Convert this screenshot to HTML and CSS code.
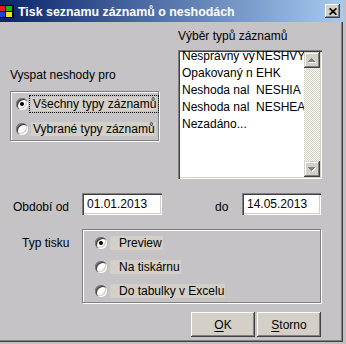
FILE: index.html
```html
<!DOCTYPE html>
<html lang="cs">
<head>
<meta charset="utf-8">
<title>Tisk seznamu záznamů o neshodách</title>
<link rel="stylesheet" href="styles.css">
</head>
<body>
<div class="window">
  <div class="titlebar">
    <svg class="app-icon" width="16" height="16" viewBox="0 0 16 16" shape-rendering="crispEdges">
      <rect x="0" y="2" width="16" height="13" fill="#000"/>
      <rect x="1" y="3" width="6" height="5" fill="#e02020"/>
      <rect x="8" y="3" width="6" height="5" fill="#20b020"/>
      <rect x="1" y="9" width="6" height="5" fill="#2040e0"/>
      <rect x="8" y="9" width="6" height="5" fill="#f0e020"/>
    </svg>
    <span class="title">Tisk seznamu záznamů o neshodách</span>
    <span class="close">
      <svg width="8" height="7" viewBox="0 0 8 7"><path d="M0.6 0.4 L7.4 6.6 M7.4 0.4 L0.6 6.6" stroke="#000" stroke-width="1.7"/></svg>
    </span>
  </div>
  <div class="client">
    <div class="top">
      <div class="scope">
        <div class="caption">Vyspat neshody pro</div>
        <div class="group scope-group">
          <div class="scope-option"><span class="radio on"></span><span class="opt-label focus">Všechny typy záznamů</span></div>
          <div class="scope-option"><span class="radio"></span><span class="opt-label">Vybrané typy záznamů</span></div>
        </div>
      </div>
      <div class="types">
        <div class="caption">Výběr typů záznamů</div>
        <div class="listbox">
          <div class="items">
            <div class="item"><span class="c1">Nesprávný vý</span><span class="c2">NESHVYS</span></div>
            <div class="item"><span class="c1">Opakovaný n</span><span class="c2">EHK</span></div>
            <div class="item"><span class="c1">Neshoda nal</span><span class="c2">NESHIA</span></div>
            <div class="item"><span class="c1">Neshoda nal</span><span class="c2">NESHEA</span></div>
            <div class="item"><span class="c1">Nezadáno...</span><span class="c2"></span></div>
          </div>
          <div class="scrollbar">
            <div class="sb-btn">
              <svg width="8" height="5" viewBox="0 0 8 5" shape-rendering="crispEdges"><path d="M4 1h1v1h1v1h1v1h1v1H1V4h1V3h1V2h1z" fill="#fff"/><path d="M3 0h1v1h1v1h1v1h1v1H0V3h1V2h1V1h1z" fill="#808080"/></svg>
            </div>
            <div class="sb-track"></div>
            <div class="sb-btn">
              <svg width="8" height="5" viewBox="0 0 8 5" shape-rendering="crispEdges"><path d="M1 1h7v1H7v1H6v1H5v1H4V4H3V3H2V2H1z" fill="#fff"/><path d="M0 0h7v1H6v1H5v1H4v1H3V3H2V2H1V1H0z" fill="#808080"/></svg>
            </div>
          </div>
        </div>
      </div>
    </div>
    <div class="dates">
      <span class="date-label">Období od</span>
      <span class="field field-from">01.01.2013</span>
      <span class="do-label">do</span>
      <span class="field field-to">14.05.2013</span>
    </div>
    <div class="print">
      <span class="print-label">Typ tisku</span>
      <div class="group print-group">
        <div class="option"><span class="radio on"></span><span class="opt-label wide">Preview</span></div>
        <div class="option"><span class="radio"></span><span class="opt-label wide">Na tiskárnu</span></div>
        <div class="option"><span class="radio"></span><span class="opt-label wide">Do tabulky v Excelu</span></div>
      </div>
    </div>
    <div class="buttons">
      <span class="btn"><u>O</u>K</span>
      <span class="btn"><u>S</u>torno</span>
    </div>
  </div>
</div>
</body>
</html>
```

FILE: styles.css
```css
* { box-sizing: border-box; }
html, body { margin: 0; padding: 0; }
body {
  width: 346px;
  height: 344px;
  overflow: hidden;
  background: #c0c0c0;
  font-family: "Liberation Sans", Arial, sans-serif;
  font-size: 12px;
  color: #000;
}
.window {
  width: 343px;
  height: 342px;
  display: flex;
  flex-direction: column;
  background: #c6c3c6;
}
.titlebar {
  flex: none;
  height: 22px;
  display: flex;
  align-items: flex-start;
  background: linear-gradient(to right, #0a246a, #a6caf0);
  overflow: hidden;
}
.app-icon {
  flex: none;
  margin: 3px 0 0 -2px;
}
.title {
  flex: 1;
  margin-left: 4px;
  padding-top: 2px;
  line-height: 20px;
  color: #fff;
  font-weight: bold;
  font-size: 12.4px;
  white-space: nowrap;
}
.close {
  flex: none;
  width: 15px;
  height: 14px;
  margin: 4px 3px 0 0;
  background: #d4d0c8;
  box-shadow: inset -1px -1px 0 #404040, inset 1px 1px 0 #fff, inset -2px -2px 0 #808080;
  display: flex;
  align-items: center;
  justify-content: center;
}
.client {
  flex: 1;
  box-shadow: inset -1px -1px 0 #404040, inset -2px -2px 0 #808080;
}
.caption { line-height: 14px; white-space: nowrap; }
.top { display: flex; margin-left: 10px; }
.scope { width: 149px; margin-top: 46px; }
.group {
  border: 1px solid #808080;
  box-shadow: inset 1px 1px 0 #fff, 1px 1px 0 #fff;
}
.scope-group {
  margin-top: 9px;
  height: 50px;
  padding: 4px 0 0 5px;
  display: flex;
  flex-direction: column;
  gap: 9px;
}
.scope-option {
  height: 16px;
  display: flex;
  align-items: center;
}
.radio {
  flex: none;
  position: relative;
  width: 12px;
  height: 12px;
  border-radius: 50%;
  background: #fff;
  box-shadow: inset 1px 1px 0 #808080, inset 2px 2px 0 #404040, inset -1px -1px 0 #fff, inset -2px -2px 0 #d4d0c8;
}
.radio.on::after {
  content: "";
  position: absolute;
  left: 4px;
  top: 4px;
  width: 4px;
  height: 4px;
  border-radius: 50%;
  background: #000;
}
.opt-label {
  margin-left: 3px;
  padding: 0 1px 0 2px;
  height: 14px;
  line-height: 14px;
  background: #d4d0c8;
  white-space: nowrap;
}
.opt-label.focus {
  outline: 1px dotted #000;
  outline-offset: 1px;
}
.opt-label.wide { padding-left: 9px; }
.types { width: 144px; margin-left: 19px; margin-top: 7px; }
.listbox {
  margin-top: 7px;
  height: 129px;
  padding: 2px;
  display: flex;
  background: #fff;
  box-shadow: inset 1px 1px 0 #808080, inset 2px 2px 0 #404040, inset -1px -1px 0 #fff, inset -2px -2px 0 #d4d0c8;
  overflow: hidden;
}
.items { flex: 1; min-width: 0; overflow: hidden; margin-top: -4px; }
.item { display: flex; height: 17px; line-height: 17px; white-space: nowrap; }
.c1 { flex: none; width: 76px; padding-left: 2px; overflow: hidden; }
.c2 { padding-left: 0; }
.scrollbar {
  flex: none;
  width: 16px;
  display: flex;
  flex-direction: column;
  background: repeating-conic-gradient(#fff 0 25%, #d4d0c8 0 50%) 0 0 / 2px 2px;
}
.sb-btn {
  flex: none;
  height: 16px;
  background: #d4d0c8;
  box-shadow: inset -1px -1px 0 #404040, inset 1px 1px 0 #d4d0c8, inset -2px -2px 0 #808080, inset 2px 2px 0 #fff;
  display: flex;
  align-items: center;
  justify-content: center;
}
.sb-track { flex: 1; }
.dates { display: flex; margin-top: 14px; height: 22px; }
.date-label, .do-label { padding-top: 7px; line-height: 14px; white-space: nowrap; }
.date-label { margin-left: 13px; width: 69px; }
.do-label { margin-left: 53px; width: 27px; }
.field {
  height: 22px;
  padding: 4px 0 0 5px;
  line-height: 14px;
  background: #fff;
  box-shadow: inset 1px 1px 0 #808080, inset 2px 2px 0 #404040, inset -1px -1px 0 #fff, inset -2px -2px 0 #d4d0c8;
}
.field-from { width: 80px; }
.field-to { width: 79px; }
.print { display: flex; margin-top: 14px; }
.print-label { margin-left: 22px; width: 60px; margin-top: 7px; line-height: 14px; }
.print-group {
  width: 239px;
  height: 74px;
  padding: 6px 0 0 12px;
  display: flex;
  flex-direction: column;
  gap: 10px;
}
.option { display: flex; align-items: flex-start; height: 14px; }
.option .radio { margin-top: 1px; }
.buttons {
  display: flex;
  justify-content: flex-end;
  gap: 2px;
  margin-top: 9px;
  padding-right: 22px;
}
.btn {
  width: 64px;
  height: 25px;
  line-height: 14px;
  background: #d4d0c8;
  box-shadow: inset -1px -1px 0 #404040, inset 1px 1px 0 #fff, inset -2px -2px 0 #808080;
  display: flex;
  align-items: center;
  justify-content: center;
}
.btn u { text-decoration-thickness: 1px; text-underline-offset: 2px; }
```
